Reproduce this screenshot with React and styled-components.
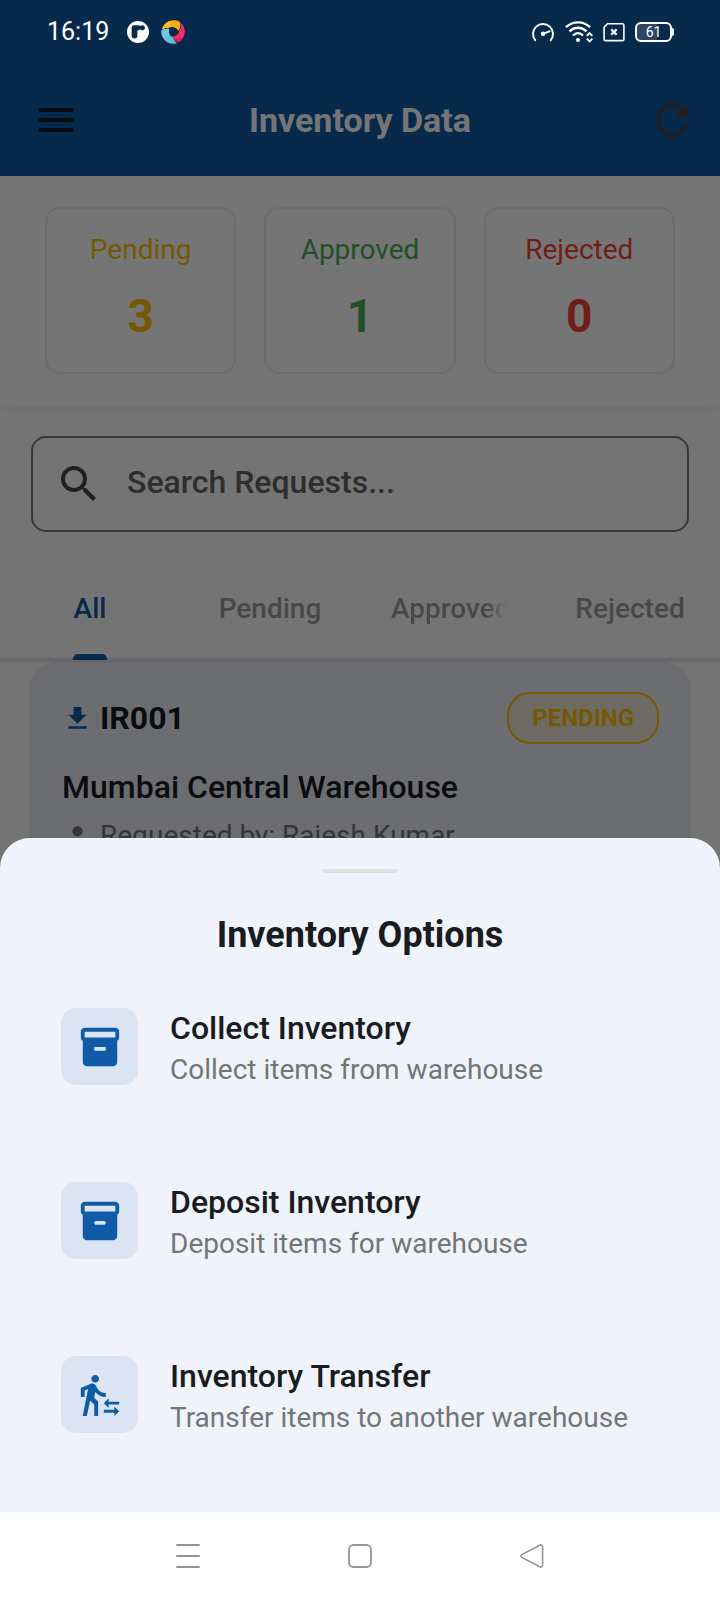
import React from "react";
import styled, { createGlobalStyle } from "styled-components";
import {
  MdMenu,
  MdRefresh,
  MdSearch,
  MdFileDownload,
  MdPerson,
  MdTransferWithinAStation,
} from "react-icons/md";

const palette = {
  primary: "#0f5ba7",
  ink: "#1a1b1f",
  muted: "#757575",
  pending: "#ffc107",
  approved: "#4caf50",
  rejected: "#f44336",
};

const GlobalStyle = createGlobalStyle`
  *, *::before, *::after { box-sizing: border-box; }
  body {
    margin: 0;
    font-family: Roboto, "Liberation Sans", sans-serif;
    color: ${palette.ink};
    background: #fff;
  }
  h1, h2, h3, p, ul { margin: 0; padding: 0; }
  button { font: inherit; color: inherit; background: none; border: 0; padding: 0; cursor: pointer; }
  svg { display: block; flex: none; }
`;

const Phone = styled.div`
  display: flex;
  flex-direction: column;
  min-height: 100vh;
`;

const Screen = styled.div`
  position: relative;
  flex: 1 0 900px;
  overflow: hidden;
  background: #fcfcff;
`;

const Header = styled.header`
  background: ${palette.primary};
`;

const StatusBar = styled.div`
  position: relative;
  z-index: 2;
  display: flex;
  align-items: center;
  height: 64px;
  padding: 0 46px 0 47px;
  color: #fff;
`;

const Clock = styled.time`
  flex: 1;
  display: flex;
  align-items: center;
  gap: 12px;
  font-size: 25px;
  line-height: 32px;
`;

const ClockText = styled.span`
  width: 68px;
`;

const StatusIcons = styled.div`
  display: flex;
  align-items: center;
  gap: 10px;
`;

const AppBar = styled.div`
  display: grid;
  grid-template-columns: 48px 1fr 48px;
  align-items: center;
  height: 112px;
  padding: 0 24px 0 32px;
`;

const AppTitle = styled.h1`
  padding-right: 8px;
  color: #fff;
  font-size: 34px;
  font-weight: 700;
  line-height: 48px;
  text-align: center;
`;

const IconButton = styled.button`
  height: 48px;
  color: ${(p) => (p.$soft ? "#43474e" : palette.ink)};
`;

const StatPanel = styled.section`
  display: grid;
  grid-template-columns: repeat(3, 1fr);
  gap: 28px;
  padding: 31px 45px;
  background: #fff;
  box-shadow: 0 4px 10px rgba(0, 0, 0, 0.06);
`;

const StatCard = styled.div`
  display: flex;
  flex-direction: column;
  align-items: center;
  gap: 18px;
  height: 167px;
  padding-top: 23px;
  border: 2px solid #eeeeee;
  border-radius: 15px;
  color: ${(p) => p.$color};
`;

const StatLabel = styled.span`
  font-size: 28px;
  line-height: 36px;
`;

const StatValue = styled.strong`
  font-size: 46px;
  font-weight: 700;
  line-height: 60px;
`;

const SearchBox = styled.label`
  display: flex;
  align-items: center;
  gap: 24px;
  height: 96px;
  margin: 31px 31px 0;
  padding: 0 22px;
  border: 2px solid #7b7c80;
  border-radius: 15px;
  color: #43474e;
`;

const SearchInput = styled.input`
  flex: 1;
  min-width: 0;
  padding: 0 0 4px;
  border: 0;
  outline: 0;
  background: none;
  font: 500 32px/40px Roboto, "Liberation Sans", sans-serif;
  color: ${palette.ink};
  &::placeholder { color: #646464; opacity: 1; }
`;

const TabBar = styled.div`
  display: grid;
  grid-template-columns: repeat(4, 1fr);
  height: 100px;
  margin-top: 30px;
  padding-top: 29px;
  border-bottom: 4px solid #e2e2e5;
`;

const Tab = styled.button`
  display: flex;
  flex-direction: column;
  align-items: center;
  justify-content: space-between;
  min-width: 0;
  padding: 0 31px;
  font-size: 28px;
  font-weight: 500;
  line-height: 36px;
  color: ${(p) => (p.$active ? palette.primary : "#9e9e9e")};
`;

const TabLabel = styled.span`
  white-space: nowrap;
  ${(p) => p.$fade && "width: 118px; overflow: hidden; mask-image: linear-gradient(90deg, #000 80%, transparent 98%);"}
`;

const TabMarker = styled.span`
  width: 34px;
  height: 6px;
  margin-bottom: -2px;
  border-radius: 5px 5px 0 0;
  background: ${palette.primary};
`;

const RequestCard = styled.article`
  margin: 0 30px;
  padding: 29px 30px 29px 31px;
  border: 1px solid #e2e4ea;
  border-radius: 28px;
  background: #ebedf3;
  box-shadow: 0 2px 4px rgba(0, 0, 0, 0.1);
`;

const RequestTop = styled.div`
  display: flex;
  align-items: center;
  gap: 7px;
  height: 52px;
`;

const RequestId = styled.h2`
  flex: 1;
  font-size: 32px;
  font-weight: 700;
  line-height: 40px;
`;

const Badge = styled.span`
  padding: 0 23px;
  border: 2px solid ${palette.pending};
  border-radius: 23px;
  background: rgba(255, 193, 7, 0.1);
  color: ${palette.pending};
  font-size: 24px;
  font-weight: 700;
  line-height: 48px;
`;

const RequestPlace = styled.h3`
  margin-top: 23px;
  font-size: 32px;
  font-weight: 500;
  line-height: 40px;
`;

const RequestMeta = styled.p`
  display: flex;
  align-items: center;
  gap: 7px;
  margin-top: 11px;
  font-size: 28px;
  line-height: 36px;
  color: ${palette.muted};
`;

const Scrim = styled.div`
  position: absolute;
  inset: 0;
  z-index: 1;
  background: rgba(0, 0, 0, 0.54);
`;

const Sheet = styled.section`
  position: absolute;
  inset: auto 0 0;
  z-index: 3;
  display: flex;
  flex-direction: column;
  align-items: center;
  padding: 31px 61px 72px;
  border-radius: 30px 30px 0 0;
  background: #f0f3fb;
`;

const Handle = styled.span`
  width: 76px;
  height: 4px;
  border-radius: 2px;
  background: #e0e0e0;
`;

const SheetTitle = styled.h2`
  margin-top: 38px;
  font-size: 36px;
  font-weight: 700;
  line-height: 48px;
`;

const OptionList = styled.ul`
  align-self: stretch;
  display: flex;
  flex-direction: column;
  gap: 90px;
  margin-top: 49px;
  list-style: none;
`;

const Option = styled.button`
  display: flex;
  align-items: flex-start;
  gap: 32px;
  width: 100%;
  text-align: left;
`;

const OptionTile = styled.span`
  display: grid;
  place-items: center;
  width: 77px;
  height: 77px;
  border-radius: 15px;
  background: #dae4f2;
  color: ${palette.primary};
`;

const OptionText = styled.span`
  display: flex;
  flex-direction: column;
`;

const OptionTitle = styled.span`
  font-size: 32px;
  font-weight: 500;
  line-height: 40px;
`;

const OptionHint = styled.span`
  font-size: 28px;
  line-height: 44px;
  color: ${palette.muted};
`;

const NavBar = styled.nav`
  display: flex;
  justify-content: center;
  align-items: center;
  gap: 148px;
  height: 88px;
  background: #fff;
  color: #949494;
`;

const NavButton = styled.button`
  width: 24px;
  height: 24px;
`;

const MessengerMark = () => (
  <svg width="22" height="22" viewBox="0 0 22 22" aria-hidden="true">
    <circle cx="11" cy="11" r="11" fill="#fff" />
    <rect x="4.600" y="4.200" width="5.800" height="13.200" rx="2.900" fill="#072a4d" />
    <path d="M8 4.200h3.600c1 0 1.500.9 2.400.9v2.600c-1.200 0-1.500 1.800-3.600 1.800z" fill="#072a4d" />
    <circle cx="15.400" cy="6.800" r="2.500" fill="#072a4d" />
  </svg>
);

const SwirlMark = () => (
  <svg width="24" height="24" viewBox="0 0 24 24" aria-hidden="true">
    <path d="M1 9.500C2.500 3.500 8-.4 14 .3c2.600.3 4.300 1.200 5.300 2.400.4 3.200-.2 6-1.800 8.300C15.800 7.500 11.500 6 8 7.400 5.500 7.500 3 8 1 9.500z" fill="#fba919" />
    <path d="M1 9.500C2 5.500 5 2.200 9 .9 10 4 9.500 6 8 7.400 5.500 7.500 3 8 1 9.500z" fill="#ffbf1f" />
    <path d="M20 3c3.800 3.400 5 9 2.600 13.800-1.200 2.500-3 4.400-5 5.400-3-1-5.400-3-6.900-5.600 4 .3 7.200-2.300 7.600-6C19.700 8.500 20.400 6 20 3z" fill="#ee2e68" />
    <path d="M10.700 16.600c3 2.500 7.500 2.800 11.900.2-1.200 2.500-3 4.400-5 5.400-3-1-5.400-3-6.900-5.600z" fill="#d81f55" />
    <path d="M.6 10.600C2.700 9 5.500 8.400 8.300 8.700c-1.400 3.800.3 7.200 3.500 8.600.8 2.400 2.200 4.400 4.200 6C9.500 25.200 3 21.800 1 15.700c-.6-1.700-.7-3.400-.4-5.100z" fill="#5bc0d8" />
    <path d="M.6 10.600C2.700 9 5.500 8.400 8.300 8.700c-.7 1.900-.6 3.700.1 5.200-1.700 1.600-2.500 4-2.200 7C2 18-.1 14.500.6 10.600z" fill="#6fcadd" />
  </svg>
);

const GaugeIcon = () => (
  <svg width="24" height="22" viewBox="0 0 24 22" fill="none" stroke="currentColor" strokeWidth="2" strokeLinecap="round" aria-hidden="true">
    <path d="M4.200 19.200A10 10 0 1 1 19.800 19.200" />
    <path d="M12.500 12.600 18.500 10.400" />
    <circle cx="12" cy="12.800" r="2.200" fill="currentColor" stroke="none" />
  </svg>
);

const WifiIcon = () => (
  <svg width="28" height="22" viewBox="0 0 28 22" fill="none" stroke="currentColor" strokeWidth="2.400" aria-hidden="true">
    <path d="M1 6.200C8-.2 18-.2 25 6.200" />
    <path d="M4.500 10.400c5-4.800 12-4.800 17 0" />
    <path d="M8 14.500c3-3 7-3 10 0" />
    <circle cx="13" cy="19" r="2.100" fill="currentColor" stroke="none" />
    <path d="M21.800 14.800 24.600 12l2.800 2.800M21.800 17.600l2.800 2.800 2.800-2.800" strokeWidth="1.800" />
  </svg>
);

const SimIcon = () => (
  <svg width="22" height="20" viewBox="0 0 22 20" fill="none" stroke="currentColor" aria-hidden="true">
    <path d="M4.500 1.800h15a1.400 1.400 0 0 1 1.400 1.400v14a1.400 1.400 0 0 1-1.400 1.400h-17A1.400 1.400 0 0 1 1.100 17.200V5.200z" strokeWidth="1.600" />
    <path d="m8.200 7.400 5.400 5.400m0-5.400-5.400 5.400" strokeWidth="2.200" />
  </svg>
);

const Battery = styled.span`
  display: flex;
  align-items: center;
`;

const BatteryBody = styled.span`
  width: 37px;
  height: 20px;
  border: 2px solid #fff;
  border-radius: 6px;
  background: linear-gradient(90deg, #2b4866 61%, transparent 61%);
  font-size: 14px;
  line-height: 16px;
  text-align: center;
`;

const BatteryTip = styled.span`
  width: 2px;
  height: 8px;
  border-radius: 0 2px 2px 0;
  background: #fff;
`;

const boxHandle = {
  square: "M15 14H9v-2h6v2z",
  round: "M14 14h-4c-.55 0-1-.45-1-1s.45-1 1-1h4c.55 0 1 .45 1 1s-.45 1-1 1z",
};

const BoxIcon = ({ handle }) => (
  <svg width="46" height="46" viewBox="0 0 24 24" fill="currentColor" fillRule="evenodd" aria-hidden="true">
    <path
      d={`M20 2H4c-1 0-2 .9-2 2v3.010c0 .72.43 1.340 1 1.690V20c0 1.100 1.100 2 2 2h14c.9 0 2-.9 2-2V8.700c.57-.35 1-.97 1-1.690V4c0-1.100-1-2-2-2z${boxHandle[handle]}M20 7H4V4h16v3z`}
    />
  </svg>
);

const stats = [
  { label: "Pending", value: 3, color: palette.pending },
  { label: "Approved", value: 1, color: palette.approved },
  { label: "Rejected", value: 0, color: palette.rejected },
];

const tabs = ["All", "Pending", "Approved", "Rejected"];

const options = [
  { title: "Collect Inventory", hint: "Collect items from warehouse", icon: <BoxIcon handle="square" /> },
  { title: "Deposit Inventory", hint: "Deposit items for warehouse", icon: <BoxIcon handle="round" /> },
  { title: "Inventory Transfer", hint: "Transfer items to another warehouse", icon: <MdTransferWithinAStation size={46} /> },
];

export default function App() {
  return (
    <>
      <GlobalStyle />
      <Phone>
        <Screen>
          <Header>
            <StatusBar>
              <Clock>
                <ClockText>16:19</ClockText>
                <MessengerMark />
                <SwirlMark />
              </Clock>
              <StatusIcons>
                <GaugeIcon />
                <WifiIcon />
                <SimIcon />
                <Battery>
                  <BatteryBody>61</BatteryBody>
                  <BatteryTip />
                </Battery>
              </StatusIcons>
            </StatusBar>
            <AppBar>
              <IconButton aria-label="Open menu"><MdMenu size={48} /></IconButton>
              <AppTitle>Inventory Data</AppTitle>
              <IconButton $soft aria-label="Refresh"><MdRefresh size={48} /></IconButton>
            </AppBar>
          </Header>

          <StatPanel>
            {stats.map((s) => (
              <StatCard key={s.label} $color={s.color}>
                <StatLabel>{s.label}</StatLabel>
                <StatValue>{s.value}</StatValue>
              </StatCard>
            ))}
          </StatPanel>

          <SearchBox>
            <MdSearch size={48} aria-hidden="true" />
            <SearchInput type="text" placeholder="Search Requests..." aria-label="Search requests" />
          </SearchBox>

          <TabBar role="tablist">
            {tabs.map((name, i) => (
              <Tab key={name} role="tab" aria-selected={i === 0} $active={i === 0}>
                <TabLabel $fade={name === "Approved"}>{name}</TabLabel>
                {i === 0 && <TabMarker />}
              </Tab>
            ))}
          </TabBar>

          <RequestCard>
            <RequestTop>
              <MdFileDownload size={31} color={palette.primary} />
              <RequestId>IR001</RequestId>
              <Badge>PENDING</Badge>
            </RequestTop>
            <RequestPlace>Mumbai Central Warehouse</RequestPlace>
            <RequestMeta>
              <MdPerson size={31} />
              Requested by: Rajesh Kumar
            </RequestMeta>
          </RequestCard>

          <Scrim />

          <Sheet role="dialog" aria-labelledby="sheet-title">
            <Handle />
            <SheetTitle id="sheet-title">Inventory Options</SheetTitle>
            <OptionList>
              {options.map((o) => (
                <li key={o.title}>
                  <Option>
                    <OptionTile>{o.icon}</OptionTile>
                    <OptionText>
                      <OptionTitle>{o.title}</OptionTitle>
                      <OptionHint>{o.hint}</OptionHint>
                    </OptionText>
                  </Option>
                </li>
              ))}
            </OptionList>
          </Sheet>
        </Screen>

        <NavBar aria-label="System navigation">
          <NavButton aria-label="Recent apps">
            <svg width="24" height="24" viewBox="0 0 24 24" fill="none" stroke="currentColor" strokeWidth="2" strokeLinecap="round">
              <path d="M1 1h22M1 12h22M1 23h22" />
            </svg>
          </NavButton>
          <NavButton aria-label="Home">
            <svg width="24" height="24" viewBox="0 0 24 24" fill="none" stroke="currentColor" strokeWidth="1.800">
              <rect x="1" y="1" width="22" height="22" rx="4.500" />
            </svg>
          </NavButton>
          <NavButton aria-label="Back">
            <svg width="24" height="24" viewBox="0 0 24 24" fill="none" stroke="currentColor" strokeWidth="1.600" strokeLinejoin="round">
              <path d="M1.800 10.600 19.600 1.200c1.600-.8 3 .1 3 1.700v18.200c0 1.600-1.400 2.500-3 1.700L1.800 13.400c-1.200-.7-1.200-2.100 0-2.800z" />
            </svg>
          </NavButton>
        </NavBar>
      </Phone>
    </>
  );
}
